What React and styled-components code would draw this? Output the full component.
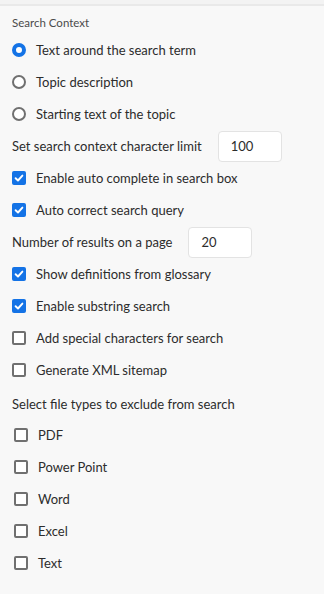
import styled, { createGlobalStyle } from 'styled-components';

const GlobalStyle = createGlobalStyle`
  html, body {
    margin: 0;
    padding: 0;
    background: #f8f8f8;
  }
  body {
    font-family: Lato, "Noto Sans", sans-serif;
  }
`;

const Panel = styled.div`
  width: 324px;
  height: 594px;
  box-sizing: border-box;
  background: #f8f8f8;
  border-top: 4px solid #f3f3f3;
  overflow: hidden;

  &::before {
    content: '';
    display: block;
    height: 2px;
    background: #e9e9e9;
  }
`;

const Body = styled.div`
  display: flex;
  flex-direction: column;
  padding: 6px 12px 0 12px;
`;

const SectionLabel = styled.div`
  font-size: 11.5px;
  color: #4b4b4b;
  height: 22px;
  line-height: 22px;
`;

const Row = styled.label`
  display: flex;
  align-items: center;
  gap: 10px;
  height: 32px;
  font-size: 13px;
  color: #2c2c2c;
  padding-left: ${(p) => (p.$indent ? '2px' : '0')};
`;

const Radio = styled.span`
  width: 14px;
  height: 14px;
  box-sizing: border-box;
  border-radius: 50%;
  flex: none;
  background: #ffffff;
  border: ${(p) => (p.$on ? '4px solid #1473e6' : '2px solid #707070')};
`;

const Box = styled.span`
  width: 14px;
  height: 14px;
  box-sizing: border-box;
  border-radius: 2px;
  flex: none;
  display: flex;
  align-items: center;
  justify-content: center;
  background: ${(p) => (p.$on ? '#1473e6' : '#ffffff')};
  border: ${(p) => (p.$on ? 'none' : '2px solid #707070')};
`;

const FieldRow = styled.div`
  display: flex;
  align-items: center;
  gap: 16px;
  height: 32px;
  font-size: 13px;
  color: #2c2c2c;
`;

const NumberBox = styled.div`
  width: 64px;
  height: 31px;
  box-sizing: border-box;
  background: #ffffff;
  border: 1px solid #e3e3e3;
  border-radius: 4px;
  padding-left: 12px;
  display: flex;
  align-items: center;
  font-size: 13px;
  color: #2c2c2c;
`;

const GroupLabel = styled.div`
  font-size: 13px;
  color: #2c2c2c;
  height: 33px;
  line-height: 36px;
`;

const Check = () => (
  <svg width="10" height="10" viewBox="0 0 10 10">
    <path d="M1.6 5.2 L4 7.5 L8.4 2.6" fill="none" stroke="#fff" strokeWidth="1.9" strokeLinecap="round" strokeLinejoin="round" />
  </svg>
);

const CheckRow = ({ on, indent, children }) => (
  <Row $indent={indent}>
    <Box $on={on}>{on && <Check />}</Box>
    {children}
  </Row>
);

const RadioRow = ({ on, children }) => (
  <Row>
    <Radio $on={on} />
    {children}
  </Row>
);

const App = () => (
  <>
    <GlobalStyle />
    <Panel>
      <Body>
        <SectionLabel>Search Context</SectionLabel>
        <RadioRow on>Text around the search term</RadioRow>
        <RadioRow>Topic description</RadioRow>
        <RadioRow>Starting text of the topic</RadioRow>
        <FieldRow>
          Set search context character limit
          <NumberBox>100</NumberBox>
        </FieldRow>
        <CheckRow on>Enable auto complete in search box</CheckRow>
        <CheckRow on>Auto correct search query</CheckRow>
        <FieldRow>
          Number of results on a page
          <NumberBox>20</NumberBox>
        </FieldRow>
        <CheckRow on>Show definitions from glossary</CheckRow>
        <CheckRow on>Enable substring search</CheckRow>
        <CheckRow>Add special characters for search</CheckRow>
        <CheckRow>Generate XML sitemap</CheckRow>
        <GroupLabel>Select file types to exclude from search</GroupLabel>
        <CheckRow indent>PDF</CheckRow>
        <CheckRow indent>Power Point</CheckRow>
        <CheckRow indent>Word</CheckRow>
        <CheckRow indent>Excel</CheckRow>
        <CheckRow indent>Text</CheckRow>
      </Body>
    </Panel>
  </>
);

export default App;
